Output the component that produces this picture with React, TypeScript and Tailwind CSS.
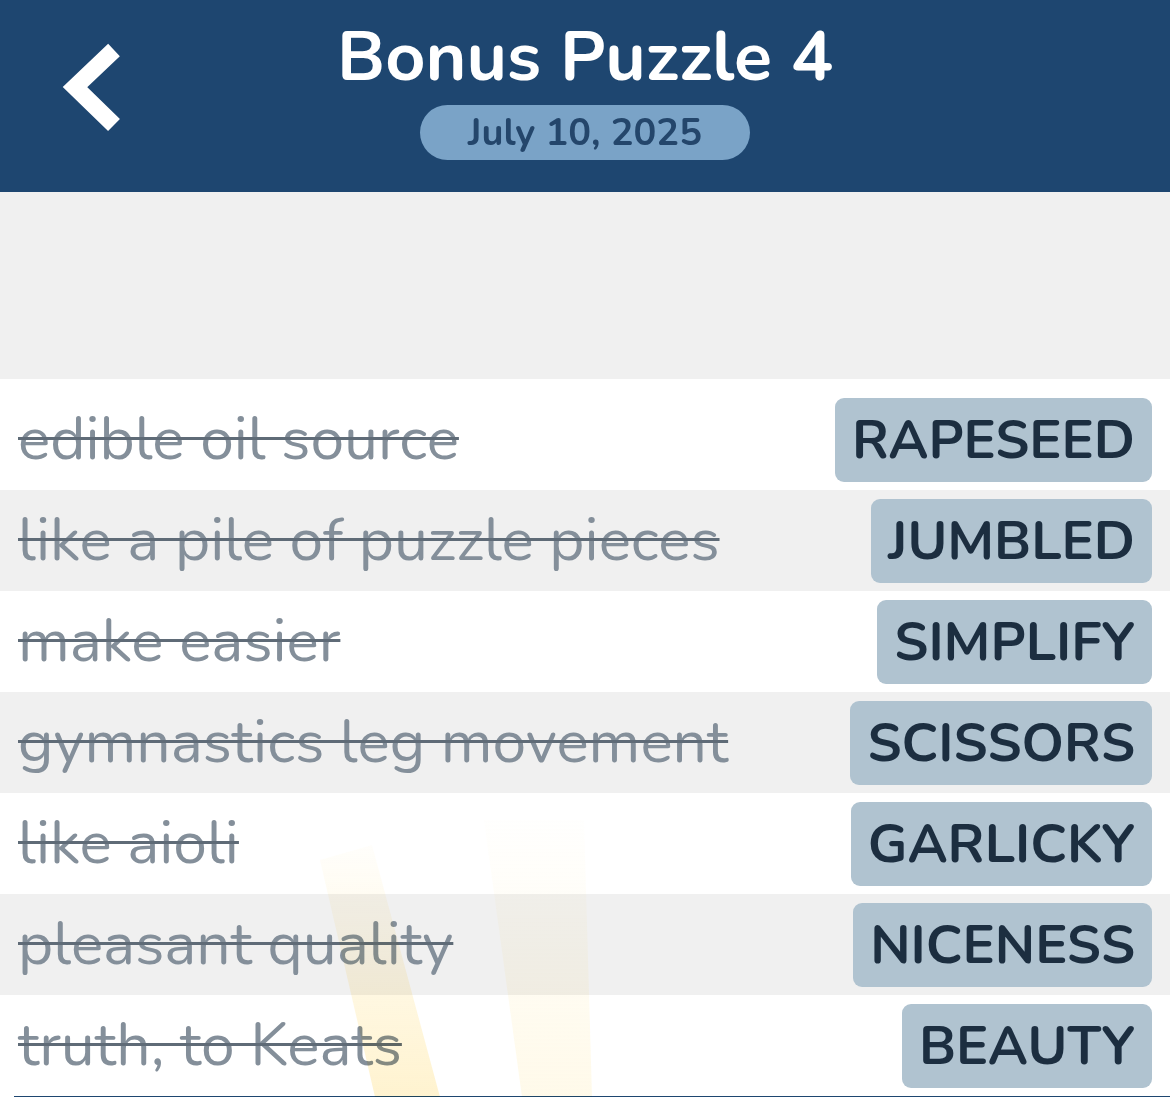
import React from "react";

const rows = [
  { clue: "edible oil source", answer: "RAPESEED" },
  { clue: "like a pile of puzzle pieces", answer: "JUMBLED" },
  { clue: "make easier", answer: "SIMPLIFY" },
  { clue: "gymnastics leg movement", answer: "SCISSORS" },
  { clue: "like aioli", answer: "GARLICKY" },
  { clue: "pleasant quality", answer: "NICENESS" },
  { clue: "truth, to Keats", answer: "BEAUTY" },
];

const font = { fontFamily: "Nunito, Lato, 'Noto Sans', sans-serif" };

export default function App() {
  return (
    <div className="w-[1170px] h-[1097px] overflow-hidden bg-white" style={font}>
      <header className="relative h-[192px] bg-[#1e4670] flex flex-col items-center">
        <svg
          className="absolute left-[60px] top-[40px]"
          width="70"
          height="96"
          viewBox="0 0 70 96"
        >
          <path
            d="M54 10 L15 47 L54 85"
            fill="none"
            stroke="#ffffff"
            strokeWidth="17"
            strokeLinejoin="miter"
            strokeLinecap="butt"
          />
        </svg>
        <h1 className="mt-[17px] text-[70px] leading-[80px] font-bold text-white">
          Bonus Puzzle 4
        </h1>
        <div className="mt-[8px] h-[55px] w-[330px] rounded-full bg-[#7aa3c7] flex items-center justify-center">
          <span className="text-[38px] font-bold text-[#24466b] leading-none">
            July 10, 2025
          </span>
        </div>
      </header>
      <div className="h-[187px] bg-[#f0f0f0]" />
      <div className="relative pt-[10px] bg-white">
        {rows.map((r, i) => (
          <div
            key={r.answer}
            className={`h-[101px] flex items-center justify-between pl-[18px] pr-[18px] ${
              i % 2 === 1 ? "bg-[#f0f0f0]" : "bg-white"
            }`}
          >
            <span className="text-[60.5px] leading-none text-[#848f9a] line-through decoration-[#5f6b77] decoration-[3px] whitespace-nowrap">
              {r.clue}
            </span>
            <div className="h-[84px] rounded-[9px] bg-[#b0c3d0] flex items-center px-[17px]">
              <span className="text-[54px] font-bold leading-none text-[#1c2e40]">
                {r.answer}
              </span>
            </div>
          </div>
        ))}
        <div className="h-[2px] ml-[14px] bg-[#1e4670]" />
        <svg
          className="absolute left-0 top-0 pointer-events-none mix-blend-multiply"
          width="1170"
          height="718"
          viewBox="0 379 1170 718"
        >
          <defs>
            <linearGradient id="rayfade" x1="0" y1="820" x2="0" y2="1097" gradientUnits="userSpaceOnUse">
              <stop offset="0" stopColor="#ffe7a0" stopOpacity="0" />
              <stop offset="1" stopColor="#ffe7a0" stopOpacity="0.5" />
            </linearGradient>
            <linearGradient id="rayfade2" x1="0" y1="800" x2="0" y2="1097" gradientUnits="userSpaceOnUse">
              <stop offset="0" stopColor="#ffeeb8" stopOpacity="0" />
              <stop offset="1" stopColor="#ffeeb8" stopOpacity="0.3" />
            </linearGradient>
          </defs>
          <polygon points="320,860 372,845 440,1097 375,1097" fill="url(#rayfade)" />
          <polygon points="484,820 584,820 592,1097 522,1097" fill="url(#rayfade2)" />
        </svg>
      </div>
    </div>
  );
}
